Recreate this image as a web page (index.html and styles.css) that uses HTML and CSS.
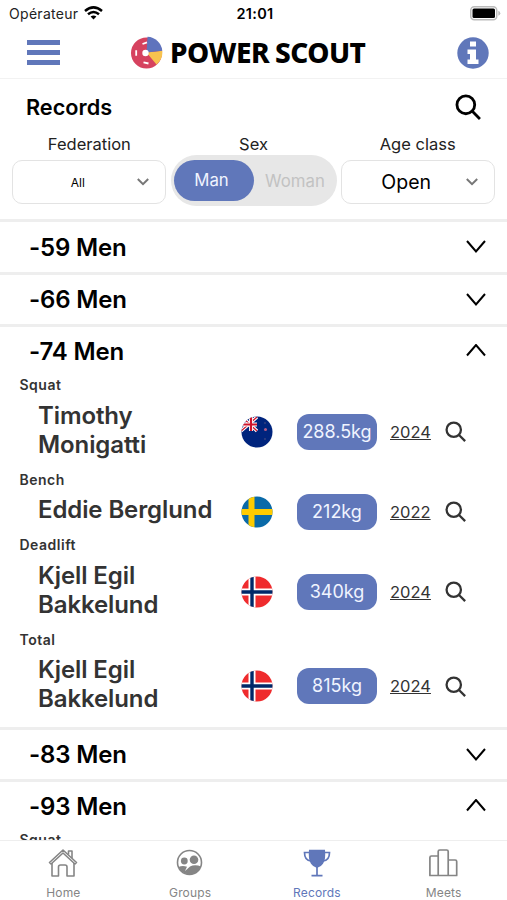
FILE: index.html
```html
<!DOCTYPE html>
<html lang="en">
<head>
<meta charset="utf-8">
<title>Power Scout</title>
<link rel="stylesheet" href="styles.css">
</head>
<body>
<svg class="defs" width="0" height="0">
  <symbol id="search" viewBox="0 0 24 24"><g fill="none" stroke="currentColor" stroke-width="2.6"><circle cx="10" cy="10" r="8.2"/><path d="M16 16l7 7"/></g></symbol>
  <symbol id="down" viewBox="0 0 20 14"><path d="M1 1l9 10.5L19 1" fill="none" stroke="currentColor" stroke-width="2"/></symbol>
  <symbol id="up" viewBox="0 0 20 14"><path d="M1 11.500L10 1l9 10.500" fill="none" stroke="currentColor" stroke-width="2"/></symbol>
  <clipPath id="round"><circle cx="16" cy="16" r="15.5"/></clipPath>
  <symbol id="nz" viewBox="0 0 32 32"><g clip-path="url(#round)"><path fill="#00247d" d="M0 0h32v32H0z"/><path d="M0 0l16 15M16 1L0 15" stroke="#fff" stroke-width="3.4"/><path d="M0 0l16 15M16 1L0 15" stroke="#cf142b" stroke-width="1.3"/><path d="M0 8.500h16M10 0v15" stroke="#fff" stroke-width="4"/><path d="M0 8.500h16M10 0v15" stroke="#cf142b" stroke-width="2.200"/><circle cx="24.500" cy="13.500" r="1.500" fill="#b05a86"/><g fill="#33407f"><circle cx="24" cy="7" r="1"/><circle cx="24" cy="23" r="1"/></g></g></symbol>
  <symbol id="se" viewBox="0 0 32 32"><g clip-path="url(#round)"><path fill="#0a6aa8" d="M0 0h32v32H0z"/><path d="M0 16h32M10.500 0v32" stroke="#fecb00" stroke-width="6"/></g></symbol>
  <symbol id="no" viewBox="0 0 32 32"><g clip-path="url(#round)"><path fill="#ef2b2d" d="M0 0h32v32H0z"/><path d="M0 16h32M11 0v32" stroke="#fff" stroke-width="7"/><path d="M0 16h32M11 0v32" stroke="#002868" stroke-width="3.400"/></g></symbol>
</svg>
<div class="app">
  <div class="status">
    <div class="carrier"><span>Opérateur</span>
      <svg width="19" height="14" viewBox="0 0 19 14"><g fill="none" stroke="#000" stroke-width="2.500"><path d="M1 5Q9.500-2.200 18 5"/><path d="M4 8.300Q9.500 3.600 15 8.300"/></g><path d="M6.600 10.600Q9.500 8.400 12.400 10.600L9.500 13.600z"/></svg>
    </div>
    <div class="clock">21:01</div>
    <svg class="battery" width="31" height="15" viewBox="0 0 31 15"><rect x=".75" y=".75" width="26" height="13" rx="3.500" fill="#fff" stroke="#bbb" stroke-width="1.500"/><rect x="2.500" y="2.500" width="22.500" height="9.500" rx="1.500"/><path d="M28.300 4.800q2 .8 2 2.500t-2 2.500z" fill="#bbb"/></svg>
  </div>
  <header class="header">
    <div class="burger"><i></i><i></i><i></i></div>
    <div class="brand">
      <svg width="33" height="33" viewBox="0 0 33 33"><circle cx="16.500" cy="17" r="15.500" fill="#d6425f"/><path d="M16.500 16.500L32.300 14.700A15.700 15.700 0 0 1 26.500 28.500z" fill="#f8c34f"/><path d="M16.500 16.500L17.500.8A15.500 15.500 0 0 1 32.300 14.700z" fill="#5f73bd"/><circle cx="15.500" cy="17" r="3.200" fill="#fff"/><path d="M6.200 14.200v5.600M12.500 8l4.500-1.700M13.500 26.300l5 1.200" stroke="#fff" stroke-width="1.800" fill="none"/></svg>
      <span class="name">POWER SCOUT</span>
    </div>
    <svg class="info" width="32" height="32" viewBox="0 0 32 32"><circle cx="16" cy="16" r="15.700" fill="#6077ba"/><path fill="#fff" d="M13 4.500h6v5h-6zM10.500 12.500H19v10h2.500v4.500h-11v-4.500H13V17h-2.500z"/></svg>
  </header>
  <section class="filters">
    <div class="heading"><h1>Records</h1><svg width="26" height="26"><use href="#search"/></svg></div>
    <div class="fields">
      <div class="field"><label>Federation</label><div class="select small"><span>All</span><svg width="12" height="8" viewBox="0 0 12 8"><path d="M.8 1l5.200 5.200L11.200 1"/></svg></div></div>
      <div class="field mid"><label>Sex</label><div class="toggle"><span class="on">Man</span><span class="off">Woman</span></div></div>
      <div class="field"><label>Age class</label><div class="select"><span>Open</span><svg width="12" height="8" viewBox="0 0 12 8"><path d="M.8 1l5.200 5.200L11.200 1"/></svg></div></div>
    </div>
  </section>
  <main class="list">
    <section class="class"><h2>-59 Men<svg width="20" height="14"><use href="#down"/></svg></h2></section>
    <section class="class"><h2>-66 Men<svg width="20" height="14"><use href="#down"/></svg></h2></section>
    <section class="class open"><h2>-74 Men<svg width="20" height="14"><use href="#up"/></svg></h2>
      <div class="record"><h3>Squat</h3><div class="row"><span class="who">Timothy<br>Monigatti</span><svg class="flag"><use href="#nz"/></svg><span class="kg">288.5kg</span><a class="year">2024</a><svg class="find"><use href="#search"/></svg></div></div>
      <div class="record"><h3>Bench</h3><div class="row"><span class="who">Eddie Berglund</span><svg class="flag"><use href="#se"/></svg><span class="kg">212kg</span><a class="year">2022</a><svg class="find"><use href="#search"/></svg></div></div>
      <div class="record"><h3>Deadlift</h3><div class="row"><span class="who">Kjell Egil<br>Bakkelund</span><svg class="flag"><use href="#no"/></svg><span class="kg">340kg</span><a class="year">2024</a><svg class="find"><use href="#search"/></svg></div></div>
      <div class="record"><h3>Total</h3><div class="row"><span class="who">Kjell Egil<br>Bakkelund</span><svg class="flag"><use href="#no"/></svg><span class="kg">815kg</span><a class="year">2024</a><svg class="find"><use href="#search"/></svg></div></div>
    </section>
    <section class="class"><h2>-83 Men<svg width="20" height="14"><use href="#down"/></svg></h2></section>
    <section class="class open"><h2>-93 Men<svg width="20" height="14"><use href="#up"/></svg></h2>
      <div class="record"><h3>Squat</h3></div>
    </section>
  </main>
  <nav class="tabs">
    <div class="tab"><svg width="30" height="30" viewBox="0 0 30 30"><g fill="none" stroke="currentColor" stroke-width="1.600" stroke-linejoin="round"><path d="M1.500 14.500L15 2l13.500 12.500-1.500 1.500L15 5 3 16z"/><path d="M4 15v13h6.500v-9q0-2 2-2h4.500q2 0 2 2v9H26V15M20.500 6.500V3H24v7"/></g></svg><span>Home</span></div>
    <div class="tab"><svg width="30" height="30" viewBox="0 0 30 30"><circle cx="14.500" cy="14.500" r="12" fill="none" stroke="currentColor" stroke-width="1.600"/><g fill="currentColor"><circle cx="9.300" cy="13" r="3.400"/><circle cx="19" cy="11.800" r="4.300"/><path d="M3.500 19q4-2 8.500-.3L10 23l5-4.500q5-2.500 11 0Q22.500 26.500 14.500 26.500 6.500 26 3.500 19z"/></g></svg><span>Groups</span></div>
    <div class="tab active"><svg width="30" height="30" viewBox="0 0 30 30"><path fill="currentColor" d="M7 1.800h16q1 10-2 14-2 3.200-6 4.200-4-1-6-4.200-3-4-2-14z"/><path fill="none" stroke="currentColor" stroke-width="1.700" d="M7 4.500H2.500q0 8 6.500 8.500M23 4.500h4.500q0 8-6.500 8.500M15 19v8M9.500 27.600h11"/></svg><span>Records</span></div>
    <div class="tab"><svg width="30" height="30" viewBox="0 0 30 30"><path fill="none" stroke="currentColor" stroke-width="1.700" stroke-linejoin="round" d="M9.200 27.500H.9v-18q0-1.500 1.500-1.500h6.800zM9.200 27.500V3.500q0-1.500 1.500-1.500h7q1.500 0 1.500 1.500v24zM19.200 12h7q1.500 0 1.500 1.500v14h-8.500"/></svg><span>Meets</span></div>
  </nav>
</div>
</body>
</html>
```
FILE: styles.css
```css
* { box-sizing: border-box; }
body { margin: 0; background: #fff; font-family: Inter, "Liberation Sans", sans-serif; color: #000; }
.defs { display: block; height: 0; }
svg { display: block; flex: none; }
h1, h2, h3 { margin: 0; }
.app { height: 900px; display: flex; flex-direction: column; overflow: hidden; }

.status { height: 27px; display: grid; grid-template-columns: 1fr auto 1fr; align-items: center; padding: 0 6px 0 9px; }
.carrier { display: flex; align-items: center; gap: 6px; font-size: 14px; letter-spacing: .3px; color: #222; }
.carrier svg { margin-bottom: 2px; }
.clock { font-size: 14.500px; font-weight: 600; letter-spacing: .3px; }
.battery { justify-self: end; }

.header { height: 52px; display: flex; align-items: center; padding: 0 18px 0 27px; border-bottom: 1px solid #f2f2f2; }
.burger { width: 33px; display: flex; flex-direction: column; gap: 5px; }
.burger i { height: 5px; background: #6077ba; }
.brand { display: flex; align-items: center; gap: 7px; margin: 0 auto 0 70px; }
.name { font: 800 28px/36px "Noto Sans", sans-serif; white-space: nowrap; letter-spacing: -.5px; word-spacing: -1px; padding-bottom: 2px; }

.filters { height: 140px; }
.heading { height: 55px; display: flex; align-items: center; justify-content: space-between; padding: 1px 26px 0; }
h1 { font-size: 21.700px; font-weight: 600; }
.fields { display: flex; padding: 0 12px; }
.field { width: 155px; display: flex; flex-direction: column; align-items: center; }
.mid { width: 174px; }
label { font-size: 16.500px; line-height: 20px; height: 26px; color: #222; }
.select { width: 154px; height: 44px; border: 1.5px solid #e3e3e3; border-radius: 10px; display: flex; align-items: center; padding-right: 16px; font-size: 19.500px; }
.select span { flex: 1; text-align: center; padding-left: 5px; }
.select path { fill: none; stroke: #777; stroke-width: 2; }
.small { font-size: 12px; }
.toggle { width: 166px; height: 51px; margin-top: -5px; border-radius: 26px; background: #e7e7e7; display: flex; align-items: center; padding: 0 3px; font-size: 16.800px; }
.on { width: 80px; height: 41px; line-height: 41px; border-radius: 21px; background: #6077ba; color: #f0f4ff; text-align: center; padding-right: 4px; }
.off { flex: 1; text-align: center; color: #c2c2c2; padding-left: 3px; }

.list { height: 621px; overflow: hidden; }
.class { border-top: 3.500px solid #eee; height: 52.500px; }
h2 { height: 49px; display: flex; align-items: center; justify-content: space-between; padding: 1px 21px 0 29px; font-size: 24px; font-weight: 600; letter-spacing: -.15px; }
.open { height: auto; }
.open h2 { height: 48px; }
.open h2 svg { margin-bottom: 2px; }
.open:nth-child(3) { height: 402.500px; }
.record { padding-bottom: 11px; }
h3 { padding-left: 19.500px; font-size: 14px; line-height: 20px; font-weight: 600; letter-spacing: .5px; color: #333; }
.row { display: flex; align-items: center; margin-top: 5.500px; padding-left: 38px; color: #333; }
.who { width: 203px; font-size: 24px; line-height: 29px; font-weight: 600; letter-spacing: -.1px; white-space: nowrap; }
.flag { width: 32px; height: 32px; margin-right: 24px; }
.flag, .kg, .year, .find { margin-top: -4px; margin-bottom: -4px; position: relative; top: 2px; }
.kg { width: 80px; height: 36px; line-height: 35px; border-radius: 12px; background: #6077ba; color: #f0f4ff; font-size: 18px; text-align: center; }
.year { width: 41px; margin-left: 13px; font-size: 16.500px; text-decoration: underline; }
.find { width: 21px; height: 21px; margin-left: 14px; }

.tabs { height: 60px; border-top: 1px solid #eee; display: flex; background: #fff; }
.tab { flex: 1; display: flex; flex-direction: column; align-items: center; padding-top: 7px; gap: 6px; color: #858585; font-size: 12px; line-height: 17px; letter-spacing: .15px; }
.active { color: #6077ba; }
```
